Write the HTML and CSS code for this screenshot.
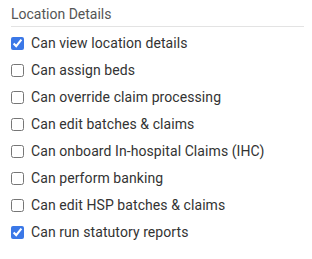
FILE: index.html
```html
<!DOCTYPE html>
<html lang="en">
<head>
  <meta charset="UTF-8">
  <title>Location Details</title>
  <link rel="stylesheet" href="styles.css">
</head>
<body>
<div class="section">
  <h3 class="section-title">Location Details</h3>
  <ul class="perm-list">
    <li><label><input type="checkbox" checked> <span>Can view location details</span></label></li>
    <li><label><input type="checkbox"> <span>Can assign beds</span></label></li>
    <li><label><input type="checkbox"> <span>Can override claim processing</span></label></li>
    <li><label><input type="checkbox"> <span>Can edit batches &amp; claims</span></label></li>
    <li><label><input type="checkbox"> <span>Can onboard In-hospital Claims (IHC)</span></label></li>
    <li><label><input type="checkbox"> <span>Can perform banking</span></label></li>
    <li><label><input type="checkbox"> <span>Can edit HSP batches &amp; claims</span></label></li>
    <li><label><input type="checkbox" checked> <span>Can run statutory reports</span></label></li>
  </ul>
</div>
</body>
</html>
```

FILE: styles.css
```css
body {
  margin: 0;
  font-family: Roboto, 'Liberation Sans', sans-serif;
  background: #fff;
}

.section {
  padding: 5px 8px 0 11px;
}

.section-title {
  margin: 0;
  padding-bottom: 3px;
  font-size: 14px;
  font-weight: 400;
  line-height: 18px;
  color: #555;
  border-bottom: 1px solid #e3e3e3;
}

.perm-list {
  list-style: none;
  margin: 0;
  padding: 7px 0 0;
}

.perm-list li {
  height: 27px;
}

.perm-list label {
  display: flex;
  align-items: center;
  gap: 7px;
  height: 18px;
  font-size: 14px;
  letter-spacing: 0.08px;
  color: #333;
}

.perm-list input {
  margin: 0;
  width: 13px;
  height: 13px;
  accent-color: #3b78e7;
}
```
